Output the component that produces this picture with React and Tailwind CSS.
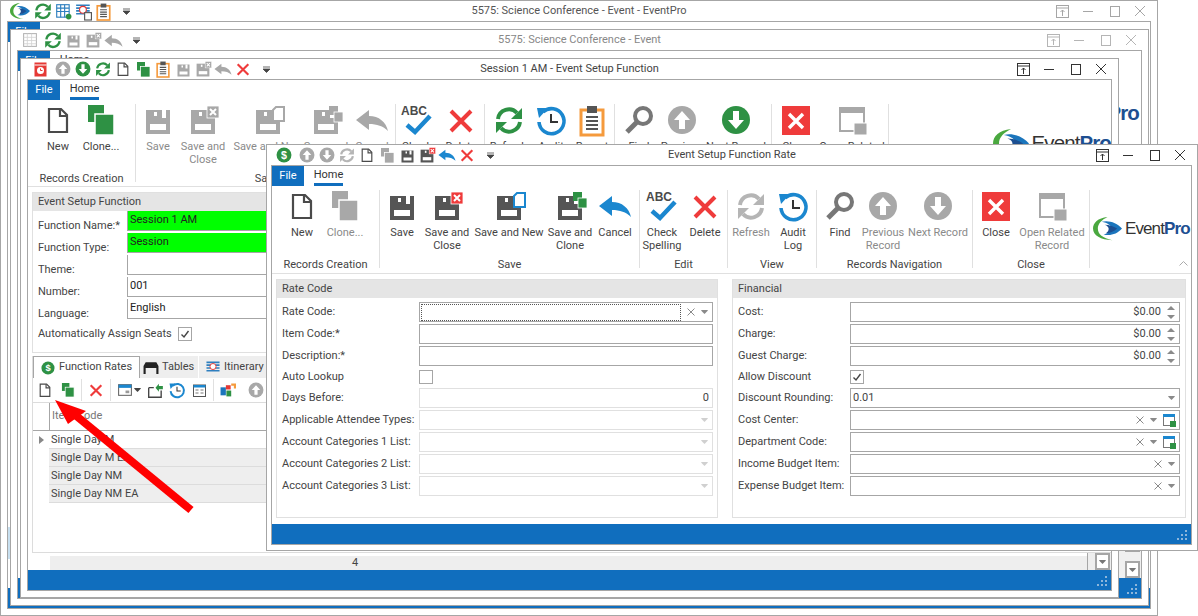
import clsx from "clsx";

const FONT = "font-['Roboto','Liberation_Sans',sans-serif]";

function Ico({ s = 30, children }) {
  return (
    <svg width={s} height={s} viewBox="0 0 30 30" className="shrink-0 overflow-visible">
      {children}
    </svg>
  );
}

const Doc = ({ s }) => (
  <Ico s={s}>
    <path d="M6 4h12l6 6v17H6z" fill="#fff" stroke="#4a4a4a" strokeWidth="2.2" />
    <path d="M17 4v7h7" fill="none" stroke="#4a4a4a" strokeWidth="2.2" />
  </Ico>
);

const Clone = ({ s, c = "#2e9144" }) => (
  <Ico s={s}>
    <rect x="2" y="0" width="16" height="17" fill={c} />
    <rect x="9" y="9" width="19" height="21" fill={c} stroke="#fff" strokeWidth="1.5" />
  </Ico>
);

// floppy, with an optional badge in the top right corner
const Save = ({ s, c = "#555", badge }) => {
  const gray = badge && badge.endsWith("Gray");
  const kind = badge && badge.replace("Gray", "");
  return (
    <Ico s={s}>
      <rect x="3" y="5" width="24" height="24" fill={c} />
      <rect x="19" y="5" width="4" height="8" fill="#fff" />
      <rect x="11" y="7" width="3" height="4" fill="#fff" />
      <rect x="7" y="19" width="16" height="6" fill="#fff" />
      {kind === "close" && (
        <>
          <rect x="19" y="1" width="12" height="12" fill={gray ? c : "#ef3b3b"} stroke="#fff" strokeWidth=".8" />
          <path d="M22 4l6 6M28 4l-6 6" stroke="#fff" strokeWidth="2" />
        </>
      )}
      {kind === "new" && (
        <path d="M20 5l3-3h8v14H20z" fill="#fff" stroke={gray ? c : "#1b87cf"} strokeWidth="2" />
      )}
      {kind === "clone" && (
        <>
          <rect x="18" y="1" width="9" height="9" fill={gray ? c : "#2e9144"} />
          <rect x="23" y="7" width="9" height="10" fill={gray ? c : "#2e9144"} stroke="#fff" strokeWidth="0.8" />
        </>
      )}
    </Ico>
  );
};

const Cancel = ({ s, c = "#1b87cf" }) => (
  <Ico s={s}>
    <path d="M-1 15 L12 5 V11 C22 11 29 17 31 26 C26 21 20 19 12 19 V25 Z" fill={c} />
  </Ico>
);

const Del = ({ s }) => (
  <Ico s={s}>
    <path d="M5 6 L25 26 M25 6 L5 26" stroke="#ef3b3b" strokeWidth="4" />
  </Ico>
);

const Abc = ({ s }) => (
  <Ico s={s}>
    <text x="-1" y="10" fontSize="12" fontWeight="700" fill="#4a4a4a" fontFamily="Liberation Sans">ABC</text>
    <path d="M5 20 L13 27 L28 11" fill="none" stroke="#1b87cf" strokeWidth="4.5" />
  </Ico>
);

const Refresh = ({ s, c = "#2e9144" }) => (
  <Ico s={s}>
    <path d="M4 14 A11 11 0 0 1 23 8" fill="none" stroke={c} strokeWidth="4" />
    <path d="M28 3 V14 H17 Z" fill={c} />
    <path d="M26 17 A11 11 0 0 1 7 23" fill="none" stroke={c} strokeWidth="4" />
    <path d="M2 28 V17 H13 Z" fill={c} />
  </Ico>
);

const Audit = ({ s }) => (
  <Ico s={s}>
    <path d="M7 7 A12.5 12.5 0 1 1 3 17" fill="none" stroke="#1b87cf" strokeWidth="3.6" />
    <path d="M1 3 L12 3 L3 13 Z" fill="#1b87cf" />
    <path d="M15 9 V17 H22" fill="none" stroke="#333" strokeWidth="2" />
  </Ico>
);

const Report = ({ s }) => (
  <Ico s={s}>
    <rect x="4" y="5" width="22" height="25" fill="#fff" stroke="#f59a3c" strokeWidth="3" />
    <rect x="10" y="1" width="10" height="7" fill="#555" />
    <path d="M9 12h12M9 16h12M9 20h12M9 24h12" stroke="#555" strokeWidth="2" />
  </Ico>
);

const Find = ({ s }) => (
  <Ico s={s}>
    <circle cx="19" cy="11" r="8" fill="#fff" stroke="#777" strokeWidth="4" />
    <path d="M13 17 L3 27" stroke="#777" strokeWidth="5" />
  </Ico>
);

const CircleArrow = ({ s, c = "#a8a8a8", up }) => (
  <Ico s={s}>
    <circle cx="15" cy="15" r="14" fill={c} />
    <path
      d={up ? "M15 6 L23 15 H18 V24 H12 V15 H7 Z" : "M15 24 L23 15 H18 V6 H12 V15 H7 Z"}
      fill="#fff"
    />
  </Ico>
);

const CloseBox = ({ s }) => (
  <Ico s={s}>
    <rect x="1" y="1" width="28" height="29" fill="#ef3b3b" />
    <path d="M8 9 L22 23 M22 9 L8 23" stroke="#fff" strokeWidth="3.4" />
  </Ico>
);

const OpenRelated = ({ s }) => (
  <Ico s={s}>
    <rect x="3" y="4" width="24" height="22" fill="#fff" stroke="#a8a8a8" strokeWidth="2" />
    <rect x="2" y="2" width="26" height="6" fill="#a8a8a8" />
    <rect x="17" y="18" width="13" height="12" fill="#a8a8a8" stroke="#fff" />
  </Ico>
);

const Dollar = ({ s }) => (
  <Ico s={s}>
    <circle cx="15" cy="15" r="14" fill="#2e9144" />
    <text x="15" y="22" fontSize="20" fontWeight="700" textAnchor="middle" fill="#fff" fontFamily="Liberation Sans">$</text>
  </Ico>
);

const Alarm = ({ s }) => (
  <Ico s={s}>
    <rect x="3" y="1" width="24" height="28" fill="#e53935" />
    <rect x="3" y="5" width="24" height="2" fill="#fff" />
    <circle cx="15" cy="17" r="7" fill="#fff" />
    <path d="M15 13 V17 H19" fill="none" stroke="#e53935" strokeWidth="2" />
  </Ico>
);

const Swoosh = ({ s }) => (
  <svg width={s} height={s * 0.8} viewBox="0 0 30 24" className="shrink-0">
    <path d="M15 0 C5 1 0 6 0 12 C0 19 8 24 20 24 C10 22 5 18 5 12 C5 7 9 3 15 0Z" fill="#4aa83f" />
    <path d="M9 5 C16 3 25 6 30 12 C25 18 17 20 11 18 C16 17 19 15 19 12 C19 9 15 6 9 5Z" fill="#1b75bc" />
    <path d="M12 8 C17 8 22 10 25 12 C22 15 17 17 13 17 C17 15 18 10 12 8Z" fill="#1d4f91" />
  </svg>
);

const GridGear = ({ s }) => (
  <Ico s={s}>
    <rect x="3" y="3" width="22" height="22" fill="#fff" stroke="#2e7fbf" strokeWidth="2" />
    <path d="M3 9h22M3 15h22M10 3v22M17 3v22" stroke="#2e7fbf" strokeWidth="2" />
    <circle cx="24" cy="24" r="5" fill="#2e9144" />
  </Ico>
);

const Sched = ({ s }) => (
  <Ico s={s}>
    <path d="M2 4h24M2 9h24M2 14h24M2 19h16" stroke="#2e7fbf" strokeWidth="3" />
    <circle cx="14" cy="12" r="6" fill="#fff" stroke="#e53935" strokeWidth="2" />
    <rect x="17" y="17" width="12" height="13" fill="#fff" stroke="#555" strokeWidth="2" />
  </Ico>
);

const GrayGrid = ({ s }) => (
  <Ico s={s}>
    <rect x="3" y="3" width="24" height="24" fill="#fff" stroke="#b5b5b5" strokeWidth="2" />
    <path d="M3 10h24M3 16h24M3 22h24M10 3v24M18 3v24" stroke="#d0d0d0" strokeWidth="1.5" />
  </Ico>
);

const Colors = ({ s }) => (
  <Ico s={s}>
    <rect x="1" y="10" width="10" height="15" fill="#1b75bc" />
    <rect x="11" y="6" width="9" height="8" fill="#e53935" />
    <rect x="12" y="16" width="9" height="11" fill="#2e9144" />
    <path d="M21 5h7v7" fill="none" stroke="#f59a3c" strokeWidth="4" />
  </Ico>
);

const WinSm = ({ s }) => (
  <Ico s={s}>
    <rect x="3" y="5" width="24" height="20" fill="#fff" stroke="#666" strokeWidth="2" />
    <rect x="3" y="5" width="24" height="6" fill="#1b87cf" />
    <rect x="16" y="16" width="7" height="5" fill="#999" />
  </Ico>
);

const Export = ({ s }) => (
  <Ico s={s}>
    <path d="M3 10h9M3 10v17h22V15" fill="none" stroke="#444" strokeWidth="2.4" />
    <path d="M15 10 L21 3 V7 H28 V13 H21 V17 Z" fill="#2e9144" />
  </Ico>
);

const FormIco = ({ s }) => (
  <Ico s={s}>
    <rect x="3" y="4" width="24" height="23" fill="#fff" stroke="#555" strokeWidth="2" />
    <rect x="3" y="4" width="24" height="5" fill="#1b87cf" />
    <path d="M7 14h6M7 20h6M17 14h6M17 20h6" stroke="#777" strokeWidth="2" />
  </Ico>
);

const Desk = ({ s }) => (
  <Ico s={s}>
    <path d="M5 6 H25 L29 13 V28 H25 V17 H5 V28 H1 V13 Z" fill="#222" />
  </Ico>
);

const ItineraryIco = ({ s }) => (
  <Ico s={s}>
    <path d="M1 5h28M1 11h28M1 17h28M1 23h28" stroke="#2e7fbf" strokeWidth="3.4" />
    <circle cx="15" cy="14" r="6.5" fill="#fff" stroke="#e53935" strokeWidth="2" />
  </Ico>
);

function WinButtons({ c }) {
  return (
    <div className="flex items-center pr-[4px]">
      <span className="flex w-[26px] justify-center">
        <svg width="13" height="13" viewBox="0 0 13 13" fill="none" stroke={c}>
          <rect x=".5" y=".5" width="12" height="12" />
          <path d="M0 3h13M6.5 11V5M4.5 7l2-2 2 2" />
        </svg>
      </span>
      <span className="flex w-[26px] justify-center">
        <svg width="12" height="12" viewBox="0 0 12 12" stroke={c}><path d="M1 6.5h10" /></svg>
      </span>
      <span className="flex w-[26px] justify-center">
        <svg width="13" height="13" viewBox="0 0 13 13" fill="none" stroke={c}><rect x="2.5" y="1.5" width="9" height="10" /></svg>
      </span>
      <span className="flex w-[26px] justify-center">
        <svg width="12" height="12" viewBox="0 0 12 12" stroke={c}><path d="M1 1l10 10M11 1L1 11" /></svg>
      </span>
    </div>
  );
}

function Qat({ items, pl }) {
  return (
    <div className={clsx("flex items-center justify-self-start", pl)}>
      {items.map((it, i) => (
        <span key={i} className={clsx("flex w-5 justify-center", i === 0 && "mr-[3px]")}>
          {it}
        </span>
      ))}
      <svg width="9" height="8" viewBox="0 0 9 8" className="ml-[9px]">
        <path d="M1 2h7M1 4h7L4.5 7.5z" stroke="#444" fill="#444" strokeWidth=".8" />
      </svg>
    </div>
  );
}

function Window({ pos, innerClass, title, titleColor, btn, qat, children }) {
  return (
    <div className={clsx("absolute flex flex-col border border-[#a6a6a6] bg-white", pos)}>
      <div className="grid h-5 shrink-0 grid-cols-[1fr_auto_1fr] items-center">
        {qat}
        <span className={clsx("whitespace-nowrap text-[11px]", titleColor)}>{title}</span>
        <div className="justify-self-end">
          <WinButtons c={btn} />
        </div>
      </div>
      <div className={clsx("relative flex min-h-0 flex-1 flex-col overflow-hidden border border-[#a6a6a6]", innerClass)}>
        {children}
      </div>
    </div>
  );
}

function TabRow({ noHome }) {
  return (
    <div className="flex h-5 shrink-0 items-stretch text-[11px]">
      <div className="flex w-8 items-center justify-center bg-[#106ebe] text-white">File</div>
      {!noHome && (
        <div className="ml-[10px] flex w-[29px] flex-col items-center justify-center border-b-[3px] border-[#106ebe] pt-[1px] leading-[14px] text-[#333]">
          Home
        </div>
      )}
    </div>
  );
}

function StatusBar() {
  return (
    <div className="flex h-5 shrink-0 items-end justify-end bg-[#106ebe] p-[3px]">
      <svg width="11" height="11" viewBox="0 0 11 11" fill="#8db6db">
        <rect x="8" y="0" width="2" height="2" />
        <rect x="4" y="4" width="2" height="2" />
        <rect x="8" y="4" width="2" height="2" />
        <rect x="0" y="8" width="2" height="2" />
        <rect x="4" y="8" width="2" height="2" />
        <rect x="8" y="8" width="2" height="2" />
      </svg>
    </div>
  );
}

function Item({ icon, lines, w, dim, className }) {
  return (
    <div className={clsx("flex shrink-0 flex-col items-center pt-[1px]", w, className)}>
      <div className="flex h-[30px] items-center justify-center">{icon}</div>
      <div className={clsx("mt-[5px] flex flex-col items-center whitespace-nowrap text-[11px] leading-[13px]", dim ? "text-[#8a8a8a]" : "text-[#444]")}>
        {lines.map((l) => (
          <span key={l}>{l}</span>
        ))}
      </div>
    </div>
  );
}

function Group({ w, label, items, labelClass }) {
  return (
    <div className={clsx("flex shrink-0", w)}>
      <div className="relative flex min-w-0 flex-1 flex-col">
        <div className="flex h-[68px]">{items}</div>
        <div className={clsx("whitespace-nowrap text-center text-[11px] leading-[14px] text-[#444]", labelClass)}>{label}</div>
      </div>
      <div className="h-[78px] w-px shrink-0 bg-[#e0e0e0]" />
    </div>
  );
}

function Logo({ big }) {
  return (
    <div className="flex items-center gap-[3px]">
      <Swoosh s={big ? 36 : 29} />
      <span className={clsx("whitespace-nowrap font-['Liberation_Sans',sans-serif] text-[#333]", big ? "text-[20.5px] tracking-[-0.9px]" : "text-[17px] tracking-[-0.9px]")}>
        Event<span className="font-bold text-[#1d4f91]">Pro</span>
      </span>
    </div>
  );
}

function Row({ label, children, labelW, h = "h-5" }) {
  return (
    <div className={clsx("flex items-center", h)}>
      <div className={clsx("shrink-0 whitespace-nowrap pt-px text-[11px] text-[#444]", labelW)}>{label}</div>
      <div className="min-w-0 flex-1">{children}</div>
    </div>
  );
}

const ClearX = ({ c = "#8a8a8a" }) => (
  <svg width="8" height="8" viewBox="0 0 8 8" stroke={c} className="shrink-0"><path d="M.5.5l7 7M7.5.5l-7 7" /></svg>
);

const Drop = ({ c = "#8a8a8a" }) => (
  <svg width="7" height="4" viewBox="0 0 8 5" fill={c} className="shrink-0"><path d="M0 0h8v1L4 5 0 1z" /></svg>
);

const Spin = () => (
  <div className="flex w-[8px] flex-col gap-[5px]">
    <svg width="8" height="4" viewBox="0 0 8 4" fill="#8a8a8a"><path d="M4 0l4 4H0z" /></svg>
    <svg width="8" height="4" viewBox="0 0 8 4" fill="#8a8a8a"><path d="M0 0h8L4 4z" /></svg>
  </div>
);

const LinkWin = () => (
  <svg width="13" height="14" viewBox="0 0 13 14" className="shrink-0">
    <rect x=".5" y="1.5" width="11" height="11" fill="#fff" stroke="#777" />
    <rect x="0" y="1" width="12" height="3" fill="#1b87cf" />
    <rect x="7" y="8" width="6" height="6" fill="#2e9144" />
  </svg>
);

function Box({ dis, children, className }) {
  return (
    <div className={clsx("flex h-5 items-center justify-end border bg-white text-[11px] text-[#444]", dis ? "border-[#e0e0e0]" : "border-[#a6a6a6]", className)}>
      {children}
    </div>
  );
}

function Panel({ title, className, children }) {
  return (
    <div className={clsx("flex flex-col border border-[#e0e0e0] bg-white", className)}>
      <div className="flex h-[18px] shrink-0 items-center bg-[#e5e5e5] px-[5px] text-[11px] text-[#444]">{title}</div>
      {children}
    </div>
  );
}

function Check({ on }) {
  return (
    <div className="flex h-[14px] w-[14px] items-center justify-center border border-[#a6a6a6] bg-white">
      {on && (
        <svg width="10" height="10" viewBox="0 0 10 10" fill="none" stroke="#444" strokeWidth="1.4"><path d="M1.5 5.5L4 8l4.5-6" /></svg>
      )}
    </div>
  );
}

const Sep = () => <div className="mx-[6px] h-[22px] w-px bg-[#e0e0e0]" />;

function SessionBody() {
  const rows = ["Single Day M", "Single Day M EA", "Single Day NM", "Single Day NM EA"];
  const fields = [
    { label: "Function Name:*", value: "Session 1 AM", green: true },
    { label: "Function Type:", value: "Session", green: true },
    { label: "Theme:", value: "" },
    { label: "Number:", value: "001" },
    { label: "Language:", value: "English" },
  ];
  return (
    <div className="flex min-h-0 flex-1 flex-col pt-[5px]">
      <Panel title="Event Setup Function" className="ml-[4px] h-[161px] shrink-0">
        <div className="flex flex-col">
          {fields.map((f) => (
            <div key={f.label} className="flex h-[22px]">
              <div className="w-[94px] shrink-0 self-end whitespace-nowrap pl-[5px] text-[11px] leading-[14px] text-[#444]">{f.label}</div>
              <div className={clsx("h-5 flex-1 border-b border-l border-[#a6a6a6] pl-[2px] text-[11px] leading-[18px] text-[#222]", f.green ? "bg-[#00ff00]" : "bg-white")}>
                {f.value}
              </div>
            </div>
          ))}
        </div>
        <div className="mt-[5px] flex h-[16px] items-center gap-[6px] pl-[5px] text-[11px] text-[#444]">
          <span className="whitespace-nowrap">Automatically Assign Seats</span>
          <Check on />
        </div>
      </Panel>

      <div className="ml-[4px] mt-[3px] flex min-h-0 flex-1 flex-col border-b border-l border-[#dcdcdc]">
        <div className="flex h-[22px] shrink-0 whitespace-nowrap text-[11px] text-[#444]">
          <div className="flex w-[107px] items-center gap-[4px] border border-b-0 border-[#a6a6a6] bg-white pl-[7px]">
            <Dollar s={14} />
            Function Rates
          </div>
          <div className="flex w-[58px] items-center gap-[3px] bg-[#eee] pl-[3px]">
            <Desk s={16} />
            Tables
          </div>
          <div className="flex flex-1 items-center gap-[4px] border-l border-white bg-[#eee] pl-[7px]">
            <ItineraryIco s={14} />
            Itinerary
          </div>
        </div>
        <div className="flex h-[25px] shrink-0 items-center border-b border-[#dcdcdc] pl-[4px]">
          <Doc s={16} />
          <span className="ml-[8px]"><Clone s={14} /></span>
          <Sep />
          <Del s={16} />
          <Sep />
          <WinSm s={16} />
          <span className="ml-[1px]"><Drop c="#444" /></span>
          <span className="ml-[6px]"><Export s={17} /></span>
          <span className="ml-[5px]"><Audit s={16} /></span>
          <span className="ml-[7px]"><FormIco s={15} /></span>
          <Sep />
          <Colors s={16} />
          <span className="ml-[12px]"><CircleArrow s={16} up /></span>
        </div>
        <div className="flex h-[28px] shrink-0 border-b border-[#a6a6a6]">
          <div className="w-[17px] shrink-0 border-r border-[#a6a6a6]" />
          <div className="flex items-center pl-[2px] text-[11px] text-[#777]">Item Code</div>
        </div>
        {rows.map((r, i) => (
          <div key={r} className="flex h-[18px] shrink-0">
            <div className="flex w-[16px] shrink-0 items-center justify-center">
              {i === 0 && <svg width="5" height="8" viewBox="0 0 5 8" fill="#888"><path d="M0 0l5 4-5 4z" /></svg>}
            </div>
            <div className={clsx("flex-1 border-b border-[#dcdcdc] pl-[2px] text-[11px] leading-[17px] text-[#444]", i > 0 && "bg-[#eee]")}>{r}</div>
          </div>
        ))}
      </div>

      <div className="flex h-[17px] shrink-0 justify-end">
        <div className="mt-[3px] ml-[22px] flex-1 bg-[#eee] pl-[302px] text-[11px] leading-[14px] text-[#444]">4</div>
        <div className="flex w-[24px] justify-end border-l border-[#a6a6a6] bg-[#eee]">
          <div className="flex w-[15px] items-center justify-center border-2 border-[#a6a6a6] bg-white">
            <Drop c="#777" />
          </div>
          <div className="w-px" />
        </div>
      </div>
    </div>
  );
}

function RateBody() {
  const lw1 = "w-[137px]";
  const lw2 = "w-[112px]";
  return (
    <div className="flex min-h-0 flex-1 gap-[14px] pb-[6px] pl-[4px] pt-[5px]">
      <Panel title="Rate Code" className="w-[442px]">
        <div className="flex w-[436px] flex-col gap-[2px] pl-[5px] pt-[4px]">
          <Row label="Rate Code:" labelW={lw1}>
            <Box className="gap-[6px] pr-[4px]">
              <div className="ml-px h-[17px] flex-1 border border-dotted border-[#555]" />
              <ClearX />
              <Drop />
            </Box>
          </Row>
          <Row label="Item Code:*" labelW={lw1}><Box /></Row>
          <Row label="Description:*" labelW={lw1}><Box /></Row>
          <Row label="Auto Lookup" labelW={lw1} h="h-[18px]"><Check /></Row>
          <Row label="Days Before:" labelW={lw1}><Box dis className="pr-[3px]">0</Box></Row>
          <Row label="Applicable Attendee Types:" labelW={lw1}><Box dis className="pr-[4px]"><Drop c="#d0d0d0" /></Box></Row>
          <Row label="Account Categories 1 List:" labelW={lw1}><Box dis className="pr-[4px]"><Drop c="#d0d0d0" /></Box></Row>
          <Row label="Account Categories 2 List:" labelW={lw1}><Box dis className="pr-[4px]"><Drop c="#d0d0d0" /></Box></Row>
          <Row label="Account Categories 3 List:" labelW={lw1}><Box dis className="pr-[4px]"><Drop c="#d0d0d0" /></Box></Row>
        </div>
      </Panel>
      <Panel title="Financial" className="w-[454px]">
        <div className="flex w-[447px] flex-col gap-[2px] pl-[5px] pt-[4px]">
          <Row label="Cost:" labelW={lw2}><Box className="gap-[6px] pr-[4px]">$0.00<Spin /></Box></Row>
          <Row label="Charge:" labelW={lw2}><Box className="gap-[6px] pr-[4px]">$0.00<Spin /></Box></Row>
          <Row label="Guest Charge:" labelW={lw2}><Box className="gap-[6px] pr-[4px]">$0.00<Spin /></Box></Row>
          <Row label="Allow Discount" labelW={lw2} h="h-[18px]"><Check on /></Row>
          <Row label="Discount Rounding:" labelW={lw2}>
            <Box className="pl-[2px] pr-[4px]"><span className="mr-auto">0.01</span><Drop /></Box>
          </Row>
          <Row label="Cost Center:" labelW={lw2}><Box className="gap-[6px] pr-[3px]"><ClearX /><Drop /><LinkWin /></Box></Row>
          <Row label="Department Code:" labelW={lw2}><Box className="gap-[6px] pr-[3px]"><ClearX /><Drop /><LinkWin /></Box></Row>
          <Row label="Income Budget Item:" labelW={lw2}><Box className="gap-[6px] pr-[4px]"><ClearX /><Drop /></Box></Row>
          <Row label="Expense Budget Item:" labelW={lw2}><Box className="gap-[6px] pr-[4px]"><ClearX /><Drop /></Box></Row>
        </div>
      </Panel>
    </div>
  );
}

export default function App() {
  const G = "#a8a8a8";
  return (
    <div className={clsx("relative h-[616px] w-[1198px] overflow-hidden bg-white", FONT)}>
      {/* Event window (back) */}
      <Window
        pos="left-0 top-0 h-[616px] w-[1158px]"
        innerClass="ml-[6px] mr-[6px] mb-[6px]"
        title="5575: Science Conference - Event - EventPro"
        titleColor="text-[#555]"
        btn="#a6a6a6"
        qat={
          <Qat
            pl="pl-[9px]"
            items={[<Swoosh s={20} />, <Refresh s={18} />, <GridGear s={17} />, <Sched s={17} />, <Report s={17} />]}
          />
        }
      >
        <TabRow noHome />
        <div className="flex-1" />
        <div className="absolute left-0 top-[505px] h-8 w-[3px] bg-[#c8e0f0]" />
        <StatusBar />
      </Window>

      <Window
        pos="left-[10px] top-[29px] h-[577px] w-[1139px]"
        innerClass="ml-[6px] mr-[6px] mb-[6px]"
        title="5575: Science Conference - Event"
        titleColor="text-[#888]"
        btn="#b5b5b5"
        qat={
          <Qat
            pl="pl-[9px]"
            items={[<GrayGrid s={16} />, <Refresh s={18} />, <Save s={15} c={G} />, <Save s={16} c={G} badge="closeGray" />, <Cancel s={17} c={G} />]}
          />
        }
      >
        <TabRow />
        <div className="flex justify-end pr-[2px] pt-[27px]">
          <Logo big />
        </div>
        <div className="flex flex-1 items-end justify-end">
          <div className="flex h-[30px] w-[22px] flex-col items-end justify-between bg-[#f0f0f0] pr-px">
            <div className="h-[4px] w-[15px] border-2 border-t-0 border-[#a6a6a6] bg-white" />
            <div className="flex h-[17px] w-[15px] items-center justify-center border-2 border-[#a6a6a6] bg-white">
              <Drop c="#777" />
            </div>
          </div>
        </div>
        <StatusBar />
      </Window>

      {/* Event Setup Function */}
      <Window
        pos="left-[20px] top-[58px] h-[540px] w-[1099px]"
        innerClass="ml-[6px] mr-[6px] mb-[6px]"
        title="Session 1 AM - Event Setup Function"
        titleColor="text-[#444]"
        btn="#333"
        qat={
          <Qat
            pl="pl-[9px]"
            items={[
              <Alarm s={15} />,
              <CircleArrow s={16} up />,
              <CircleArrow s={16} c="#2e9144" />,
              <Refresh s={16} />,
              <Doc s={16} />,
              <Clone s={15} />,
              <Report s={16} />,
              <Save s={15} c={G} />,
              <Save s={16} c={G} badge="closeGray" />,
              <Cancel s={16} c={G} />,
              <Del s={16} />,
            ]}
          />
        }
      >
        <TabRow />
        <div className="flex h-[87px] shrink-0 items-start border-b border-[#e0e0e0] pt-[4px]">
          <Group
            w="w-[108px]"
            label="Records Creation"
            items={
              <>
                <Item w="w-[60px]" icon={<Doc />} lines={["New"]} />
                <Item w="w-[26px]" icon={<Clone />} lines={["Clone..."]} />
              </>
            }
          />
          <Group
            w="w-[260px]"
            label="Save"
            labelClass="pl-[2px]"
            items={
              <>
                <Item dim w="w-[44px]" icon={<Save c={G} />} lines={["Save"]} />
                <Item dim w="w-[46px]" icon={<Save c={G} badge="closeGray" />} lines={["Save and", "Close"]} />
                <Item dim w="w-[84px]" icon={<Save c={G} badge="newGray" />} lines={["Save and New"]} />
                <Item dim w="w-[32px]" icon={<Save c={G} badge="cloneGray" />} lines={["Save and", "Clone"]} />
                <Item dim w="w-[48px]" className="ml-[6px]" icon={<Cancel c={G} />} lines={["Cancel"]} />
              </>
            }
          />
          <Group
            w="w-[89px]"
            label="Edit"
            items={
              <>
                <Item w="w-[42px]" icon={<Abc />} lines={["Check", "Spelling"]} />
                <Item w="w-[46px]" icon={<Del />} lines={["Delete"]} />
              </>
            }
          />
          <Group
            w="w-[130px]"
            label="View"
            items={
              <>
                <Item w="w-[47px]" icon={<Refresh />} lines={["Refresh"]} />
                <Item w="w-[38px]" icon={<Audit />} lines={["Audit", "Log"]} />
                <Item w="w-[44px]" icon={<Report />} lines={["Report"]} />
              </>
            }
          />
          <Group
            w="w-[157px]"
            label="Records Navigation"
            items={
              <>
                <Item w="w-[48px]" icon={<Find />} lines={["Find"]} />
                <Item w="w-[38px]" icon={<CircleArrow up />} lines={["Previous", "Record"]} />
                <Item w="w-[70px]" icon={<CircleArrow c="#2e9144" />} lines={["Next Record"]} />
              </>
            }
          />
          <Group
            w="w-[117px]"
            label="Close"
            items={
              <>
                <Item w="w-[48px]" icon={<CloseBox />} lines={["Close"]} />
                <Item w="w-[64px]" icon={<OpenRelated />} lines={["Open Related", "Record"]} />
              </>
            }
          />
          <div className="flex h-[78px] flex-1 items-center justify-end">
            <Logo big />
          </div>
        </div>
        <SessionBody />
        <StatusBar />
      </Window>

      {/* red callout arrow pasted over the screenshot */}
      <svg viewBox="0 0 1198 616" className="pointer-events-none absolute left-0 top-0 h-[616px] w-[1198px]">
        <path d="M74 414 L191 510" stroke="#ff0000" strokeWidth="8" />
        <path d="M55 400 L86 411 L68 424 Z" fill="#ff0000" />
      </svg>

      {/* Event Setup Function Rate (front) */}
      <Window
        pos="left-[266px] top-[144px] h-[407px] w-[932px]"
        innerClass="ml-[4px] mr-[5px] mb-[5px]"
        title="Event Setup Function Rate"
        titleColor="text-[#444]"
        btn="#333"
        qat={
          <Qat
            pl="pl-[7px]"
            items={[
              <Dollar s={16} />,
              <CircleArrow s={16} up />,
              <CircleArrow s={16} />,
              <Refresh s={16} c="#b5b5b5" />,
              <Doc s={16} />,
              <Clone s={15} c={G} />,
              <Save s={15} />,
              <Save s={16} badge="close" />,
              <Cancel s={16} />,
              <Del s={16} />,
            ]}
          />
        }
      >
        <TabRow />
        <div className="flex h-[88px] shrink-0 items-start border-b border-[#e0e0e0] pt-[4px]">
          <Group
            w="w-[108px]"
            label="Records Creation"
            items={
              <>
                <Item w="w-[60px]" icon={<Doc />} lines={["New"]} />
                <Item dim w="w-[26px]" icon={<Clone c={G} />} lines={["Clone..."]} />
              </>
            }
          />
          <Group
            w="w-[260px]"
            label="Save"
            items={
              <>
                <Item w="w-[44px]" icon={<Save />} lines={["Save"]} />
                <Item w="w-[46px]" icon={<Save badge="close" />} lines={["Save and", "Close"]} />
                <Item w="w-[78px]" icon={<Save badge="new" />} lines={["Save and New"]} />
                <Item w="w-[44px]" icon={<Save badge="clone" />} lines={["Save and", "Clone"]} />
                <Item w="w-[46px]" icon={<Cancel />} lines={["Cancel"]} />
              </>
            }
          />
          <Group
            w="w-[88px]"
            label="Edit"
            items={
              <>
                <Item w="w-[44px]" icon={<Abc />} lines={["Check", "Spelling"]} />
                <Item w="w-[42px]" icon={<Del />} lines={["Delete"]} />
              </>
            }
          />
          <Group
            w="w-[89px]"
            label="View"
            items={
              <>
                <Item dim w="w-[46px]" icon={<Refresh c="#b5b5b5" />} lines={["Refresh"]} />
                <Item w="w-[38px]" icon={<Audit />} lines={["Audit", "Log"]} />
              </>
            }
          />
          <Group
            w="w-[156px]"
            label="Records Navigation"
            items={
              <>
                <Item w="w-[46px]" icon={<Find />} lines={["Find"]} />
                <Item dim w="w-[40px]" icon={<CircleArrow up />} lines={["Previous", "Record"]} />
                <Item dim w="w-[70px]" icon={<CircleArrow />} lines={["Next Record"]} />
              </>
            }
          />
          <Group
            w="w-[117px]"
            label="Close"
            items={
              <>
                <Item w="w-[46px]" icon={<CloseBox />} lines={["Close"]} />
                <Item dim w="w-[66px]" icon={<OpenRelated />} lines={["Open Related", "Record"]} />
              </>
            }
          />
          <div className="relative flex h-[78px] flex-1 items-center pl-[3px]">
            <Logo />
            <svg width="9" height="5" viewBox="0 0 9 5" fill="none" stroke="#aaa" className="absolute bottom-[2px] right-[3px]"><path d="M.5 4.5l4-4 4 4" /></svg>
          </div>
        </div>
        <RateBody />
        <StatusBar />
      </Window>
    </div>
  );
}
